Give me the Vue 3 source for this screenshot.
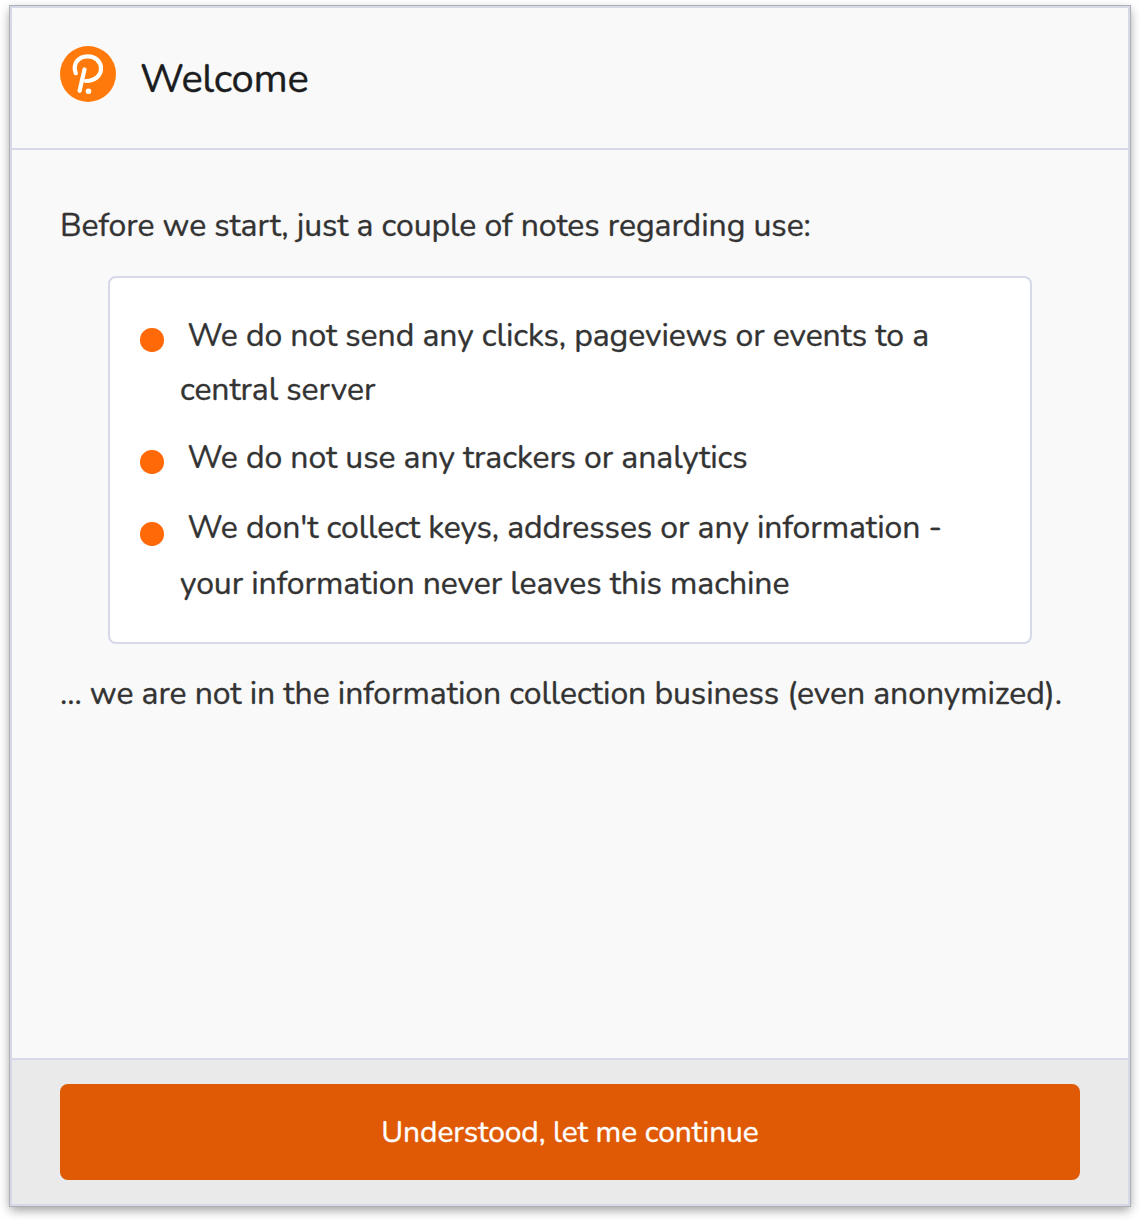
<script setup>
const notes = [
  { lines: ['We do not send any clicks, pageviews or events to a', 'central server'] },
  { lines: ['We do not use any trackers or analytics'] },
  { lines: ["We don't collect keys, addresses or any information -", 'your information never leaves this machine'] },
]
</script>

<template>
  <main class="window">
    <header class="header">
      <svg class="logo" viewBox="0 0 56 56" aria-hidden="true">
        <circle cx="28" cy="28" r="28" fill="#ff7a0a" />
        <path d="M15.800 27.200C12.500 18.500 17.500 10.300 27.800 10.300C35.500 10.300 41 15.800 41 22.500C41 29.500 35 35 26 35M24.500 23.500L19.600 44.800" fill="none" stroke="#fff" stroke-width="4.200" stroke-linecap="round" />
        <circle cx="28.500" cy="45.200" r="2.800" fill="#fff" />
      </svg>
      <h1>Welcome</h1>
    </header>
    <section class="content">
      <p>Before we start, just a couple of notes regarding use:</p>
      <ul class="notes">
        <li v-for="(note, i) in notes" :key="i">
          <span class="bullet"></span>
          <div class="note">
            <span v-for="line in note.lines" :key="line">{{ line }}</span>
          </div>
        </li>
      </ul>
      <p>... we are not in the information collection business (even anonymized).</p>
    </section>
    <footer class="footer">
      <button>Understood, let me continue</button>
    </footer>
  </main>
</template>

<style>
body { margin: 0; background: #fff; }
#app { display: flow-root; height: 1220px; overflow: hidden; }
</style>
<style scoped>
* { box-sizing: border-box; }
.window {
  width: 1120px;
  height: 1200px;
  margin: 6px 10px 0;
  border: 2px solid #d6d9e8;
  background: #f9f9f9;
  display: flex;
  flex-direction: column;
  box-shadow: 0 0 0 1px #b0b0b4, 0 4px 10px rgba(0, 0, 0, 0.4);
  font-family: "Nunito", "Open Sans", sans-serif;
  font-size: 32px;
  letter-spacing: -0.08px;
  -webkit-text-stroke: 0.35px currentColor;
  color: #333;
  white-space: nowrap;
}
.header {
  height: 142px;
  flex: none;
  padding: 38px 48px 0;
  border-bottom: 2px solid #d6d9e8;
  display: flex;
  align-items: flex-start;
  gap: 24px;
}
.logo { width: 56px; height: 56px; }
h1 { margin: 5px 0 0; font-size: 40px; font-weight: 400; line-height: 56px; letter-spacing: -0.3px; color: #1b1c20; }
.content { flex: 1; padding: 48px 48px 0; }
p { margin: 0; line-height: 56px; }
.notes {
  list-style: none;
  margin: 22px 48px;
  padding: 31px 30px 29px;
  height: 368px;
  border: 2px solid #d6d9e8;
  border-radius: 8px;
  background: #fff;
}
li { display: flex; align-items: flex-start; line-height: 54px; }
li + li { margin-top: 14px; }
li:last-child { margin-top: 15px; line-height: 56px; }
.bullet { flex: none; width: 23.500px; height: 23.500px; margin: 19.200px 16.500px 0 0; border-radius: 50%; background: #ff6908; }
li:last-child .bullet { margin-top: 22.200px; }
.note span { display: block; }
.note span:first-child { padding-left: 7.500px; }
.footer { flex: none; height: 146px; padding: 24px 48px; border-top: 2px solid #d6d9e8; background: #eaeaea; }
button {
  display: block;
  width: 100%;
  height: 96px;
  padding: 2px 0 0;
  border: 0;
  border-radius: 8px;
  background: #e05a05;
  color: #fff;
  font: 400 30px/94px "Nunito", "Open Sans", sans-serif;
  letter-spacing: -0.1px;
}
</style>
